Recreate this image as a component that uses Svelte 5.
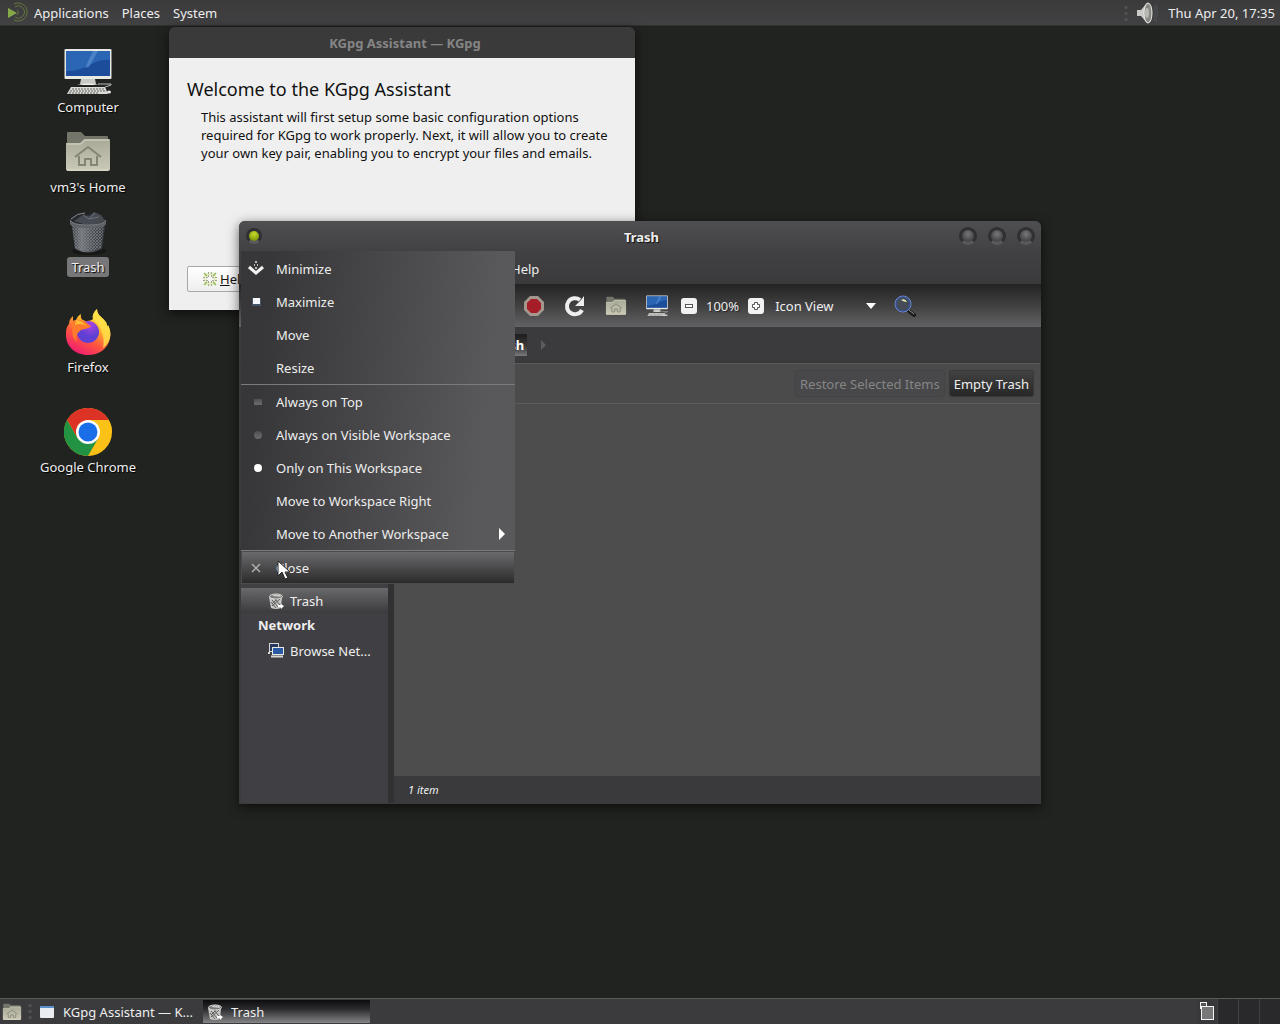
<script lang="ts">
	type Glyph = 'computer' | 'home' | 'bin' | 'firefox' | 'chrome';

	interface Launcher {
		label: string;
		glyph: Glyph;
		selected?: boolean;
		spaced?: boolean;
	}

	const launchers: Launcher[] = [
		{ label: 'Computer', glyph: 'computer' },
		{ label: "vm3's Home", glyph: 'home' },
		{ label: 'Trash', glyph: 'bin', selected: true },
		{ label: 'Firefox', glyph: 'firefox', spaced: true },
		{ label: 'Google Chrome', glyph: 'chrome', spaced: true }
	];

	const menus = ['Applications', 'Places', 'System'];
	const workspaces = [1, 2, 3, 4];

	let onTop = $state(false);
	let placement = $state('this');
	let viewMode = $state('Icon View');
</script>

{#snippet computer(size: number)}
	<svg width={size} height={size} viewBox="0 0 48 48" aria-hidden="true">
		<rect x="0.5" y="1" width="47" height="30" rx="1" fill="#e8e8e4" />
		<rect x="2" y="3" width="44" height="25" fill="#1c4d9a" />
		<path d="M2 3h44v9C30 10 22 24 2 23z" fill="#2a66b4" />
		<path d="M29 3l-8 17 4-1 9-16z" fill="#6b9ddb" opacity=".5" />
		<path d="M17 31h14l1 5H16z" fill="#c9c9c5" />
		<path d="M13 37q11-3 22 0z" fill="#f4f4f0" />
		<path d="M34 36h13v1l-6 2" fill="none" stroke="#bdbdb8" />
		<path d="M7 39h34l3 7H3z" fill="#dadad6" />
		<path d="M8 41h33M6 43h36M5 45h30" stroke="#62625f" stroke-dasharray="2 1" />
		<ellipse cx="45" cy="44" rx="2" ry="1.5" fill="#e8e8e4" />
	</svg>
{/snippet}

{#snippet homeFolder(size: number)}
	<svg width={size} height={size} viewBox="0 0 48 48" aria-hidden="true">
		<defs>
			<linearGradient id="folder-front" x2="0" y2="1">
				<stop offset="0" stop-color="#a9a997" />
				<stop offset="1" stop-color="#cbcab8" />
			</linearGradient>
		</defs>
		<path d="M3 40V5q0-1 1-1h13l4 4h22q1 0 1 1v30z" fill="#74756a" />
		<path d="M2 15h14l4-4h25q1 0 1 1v29q0 2-2 2H4q-2 0-2-2z" fill="url(#folder-front)" />
		<path d="M3 16h14l4-4h24" fill="none" stroke="#d8d7c6" />
		<path d="M3 42h41" stroke="#deddcb" />
		<path d="M11 29l13-10 13 10M15 28v9h6v-6h6v6h6v-9" fill="none" stroke="#858575" stroke-width="2" />
	</svg>
{/snippet}

{#snippet bin()}
	<svg width="48" height="48" viewBox="0 0 48 48" aria-hidden="true">
		<defs>
			<linearGradient id="bin-side">
				<stop offset="0" stop-color="#33363b" />
				<stop offset=".3" stop-color="#72767b" />
				<stop offset=".6" stop-color="#4b4f55" />
				<stop offset="1" stop-color="#303338" />
			</linearGradient>
			<pattern id="bin-mesh" width="3" height="3" patternUnits="userSpaceOnUse">
				<path d="M0 0l3 3M3 0L0 3" stroke="#85898e" stroke-width=".6" />
			</pattern>
		</defs>
		<ellipse cx="25" cy="43" rx="17" ry="4" fill="#111" opacity=".6" />
		<path d="M7 13l4 28q13 7 27 0l4-28z" fill="url(#bin-side)" />
		<path d="M8 17l3 23q13 6 26 0l3-23z" fill="url(#bin-mesh)" />
		<ellipse cx="24" cy="12" rx="18" ry="6" fill="#26292d" />
		<path d="M10 13l9-6 6 1 5-4 7 3 4 6q-15 7-31 0z" fill="#454a50" />
		<path d="M19 7l6 4 6-6M25 11l10-2" fill="none" stroke="#6b7076" />
		<path d="M6 12q2 5 18 5t18-5v4q-2 4-18 4T6 16z" fill="#5f6369" />
		<path d="M6 12q2 5 18 5t18-5" fill="none" stroke="#7c8085" />
		<path d="M7 11q6-6 14-6" fill="none" stroke="#8b8f94" />
	</svg>
{/snippet}

{#snippet smallBin()}
	<svg width="16" height="16" viewBox="0 0 16 16" aria-hidden="true">
		<path d="M1 4l2 11q5 2 10 0l1-11z" fill="#c6c7c4" />
		<path d="M4 7l6 7M7 6l5 6M3 9l5 6M12 6l-8 7M9 6l-5 5" stroke="#5c5c5c" />
		<ellipse cx="8" cy="3.500" rx="6.500" ry="2.500" fill="#777" stroke="#d9dad6" />
		<path d="M4 3l3-2 2 1 3-1 1 3" fill="#cacbc7" />
		<path d="M10 12h3v-1l3 2-3 3v-2h-3z" fill="#fff" />
	</svg>
{/snippet}

{#snippet firefox()}
	<svg width="48" height="48" viewBox="0 0 48 48" aria-hidden="true">
		<defs>
			<linearGradient id="fox-body" x1=".8" y1="0" x2=".25" y2="1">
				<stop offset="0" stop-color="#fff44f" />
				<stop offset=".35" stop-color="#ffb52e" />
				<stop offset=".65" stop-color="#ff553f" />
				<stop offset="1" stop-color="#ed1976" />
			</linearGradient>
			<radialGradient id="fox-globe" cx=".6" cy=".2">
				<stop offset="0" stop-color="#a946e0" />
				<stop offset="1" stop-color="#6040d4" />
			</radialGradient>
		</defs>
		<path d="M5 16c0-4 2-6 4-8v5l3-1c1-3 3-5 5-6-1 5 2 7 6 7 2 0 5-1 6-2-1-5 2-8 4-10 0 6 5 8 8 12 2 2 2 4 2 6l1-2c2 4 3 8 2 13C44 41 35 47 24 47 11 47 1 38 2 25c0-4 1-7 3-9z" fill="url(#fox-body)" />
		<path d="M33 1c0 6 5 8 8 12 2 2 2 4 2 6l1-2c2 4 3 8 2 13-1 4-4 8-7 10 2-8 0-20-10-29-1-5 2-8 4-10z" fill="#ffe14a" opacity=".8" />
		<circle cx="24" cy="24" r="11" fill="url(#fox-globe)" />
		<path d="M9 13c5-2 11-1 14 2 2 2 3 3 4 3-1 2-4 2-6 3-2 0-5 1-6 3-3 2-3 6-2 10-5-3-6-13-4-21z" fill="#ff7a2c" />
		<path d="M12 12c4 0 7 2 11 6-4-2-8-3-12-1z" fill="#ffbd35" />
	</svg>
{/snippet}

{#snippet chrome()}
	<svg width="48" height="48" viewBox="0 0 48 48" aria-hidden="true">
		<circle cx="24" cy="24" r="24" fill="#fbc116" />
		<path d="M24 24L3.200 12A24 24 0 0 1 44.800 12z" fill="#dd3327" />
		<path d="M24 12h20.800A24 24 0 0 1 48 24H24z" fill="#fbc116" />
		<path d="M3.200 12A24 24 0 0 0 24 48L34.400 30H24L13.600 30z" fill="#229342" />
		<path d="M3.200 12L13.600 30 24 12z" fill="#dd3327" />
		<circle cx="24" cy="24" r="12" fill="#fff" />
		<circle cx="24" cy="24" r="9.500" fill="#1a6fe8" />
	</svg>
{/snippet}

{#snippet grip()}
	<svg width="4" height="20" viewBox="0 0 4 20" aria-hidden="true">
		<path d="M2 3v3M2 9v3M2 15v3" stroke="#505052" stroke-width="3" />
	</svg>
{/snippet}

<div class="screen">
	<header class="panel">
		<svg class="logo" width="22" height="22" viewBox="0 0 22 22" aria-hidden="true">
			<path d="M2 6l9 5-9 5z" fill="#86a948" />
			<path d="M8 2a9 9 0 1 1 0 16M9 5a6 6 0 1 1 0 10M11 8a3 3 0 0 1 0 5" fill="none" stroke="#66773f" />
		</svg>
		<nav class="menus" aria-label="Desktop menus">
			{#each menus as name}
				<button type="button">{name}</button>
			{/each}
		</nav>
		<div class="tray">
			{@render grip()}
			<button type="button" aria-label="Volume">
				<svg width="22" height="22" viewBox="0 0 22 22" aria-hidden="true">
					<path d="M1 8h4l6-7q4-1 5 10-1 11-5 10l-6-7H1z" fill="#c9cac6" />
					<ellipse cx="12" cy="11" rx="4" ry="10" fill="#888985" stroke="#ecece9" />
					<ellipse cx="11" cy="11" rx="2" ry="5" fill="#b8b9b4" />
					<path d="M18 4q3 7 0 14M20 2q3 9 0 18" fill="none" stroke="#4c5159" />
				</svg>
			</button>
			<button type="button" class="clock">Thu Apr 20, 17:35</button>
		</div>
	</header>

	<main class="desktop">
		<nav class="launchers" aria-label="Desktop icons">
			{#each launchers as item}
				<button type="button" class="launcher" class:spaced={item.spaced}>
					{#if item.glyph === 'computer'}
						{@render computer(48)}
					{:else if item.glyph === 'home'}
						{@render homeFolder(48)}
					{:else if item.glyph === 'bin'}
						{@render bin()}
					{:else if item.glyph === 'firefox'}
						{@render firefox()}
					{:else}
						{@render chrome()}
					{/if}
					<span class:selected={item.selected}>{item.label}</span>
				</button>
			{/each}
		</nav>

		<section class="window assistant" aria-label="KGpg Assistant">
			<div class="titlebar inactive">KGpg Assistant — KGpg</div>
			<div class="assistant-page">
				<h1>Welcome to the KGpg Assistant</h1>
				<p>
					This assistant will first setup some basic configuration options required for KGpg to work
					properly. Next, it will allow you to create your own key pair, enabling you to encrypt your
					files and emails.
				</p>
				<button type="button" class="help">
					<svg width="16" height="16" viewBox="0 0 16 16" aria-hidden="true">
						<circle cx="8" cy="8" r="5" fill="none" stroke="#e9edd0" stroke-width="4" />
						<path d="M3 4l1-1M12 3l1 1M3 12l1 1M12 13l1-1" stroke="#93b84e" stroke-width="4" />
						<path d="M6 2h4M6 14h4M2 6v4M14 6v4M6 5h4M6 11h4M5 6v4M11 6v4" stroke="#5d6547" stroke-dasharray="1 2" />
					</svg>
					<span><u>H</u>elp</span>
				</button>
			</div>
		</section>

		<section class="window files" aria-label="Trash">
			<div class="titlebar">
				<button type="button" class="knob lit" aria-label="Window menu"></button>
				<span class="caption">Trash</span>
				<div class="knobs">
					<button type="button" class="knob" aria-label="Minimize window"></button>
					<button type="button" class="knob" aria-label="Maximize window"></button>
					<button type="button" class="knob" aria-label="Close window"></button>
				</div>
			</div>

			<div class="menubar"><button type="button">Help</button></div>

			<div class="toolbar">
				<button type="button" class="tool" aria-label="Stop">
					<svg width="22" height="22" viewBox="0 0 22 22" aria-hidden="true">
						<path d="M7 1h8l6 6v8l-6 6H7l-6-6V7z" fill="#a4978d" />
						<path d="M8 4h6l4 4v6l-4 4H8l-4-4V8z" fill="#a51d26" />
					</svg>
				</button>
				<button type="button" class="tool" aria-label="Reload">
					<svg width="22" height="22" viewBox="0 0 22 22" aria-hidden="true">
						<path d="M18 15a8 8 0 1 1-2-10" fill="none" stroke="#eee" stroke-width="4" />
						<path d="M20 1v10h-9l3-3 3-3z" fill="#eee" />
					</svg>
				</button>
				<button type="button" class="tool" aria-label="Home">{@render homeFolder(22)}</button>
				<button type="button" class="tool" aria-label="Computer">{@render computer(22)}</button>
				<div class="zoom">
					<button type="button" aria-label="Zoom out">
						<svg width="16" height="16" viewBox="0 0 16 16" aria-hidden="true">
							<rect width="16" height="16" rx="3" fill="#f2f2f2" />
							<rect x="4.500" y="6.500" width="7" height="3" fill="#fff" stroke="#555" />
						</svg>
					</button>
					<span>100%</span>
					<button type="button" aria-label="Zoom in">
						<svg width="16" height="16" viewBox="0 0 16 16" aria-hidden="true">
							<rect width="16" height="16" rx="3" fill="#f2f2f2" />
							<path d="M6.500 4.500h3v2h2v3h-2v2h-3v-2h-2v-3h2z" fill="#fff" stroke="#555" />
						</svg>
					</button>
				</div>
				<div class="view">
					<select aria-label="View mode" bind:value={viewMode}>
						<option>Icon View</option>
					</select>
					<svg width="10" height="6" viewBox="0 0 10 6" aria-hidden="true">
						<path d="M0 0h10L5 6z" fill="#fff" />
					</svg>
				</div>
				<button type="button" class="tool" aria-label="Search">
					<svg width="22" height="22" viewBox="0 0 22 22" aria-hidden="true">
						<path d="M15 16l5 4" stroke="#1b1b1b" stroke-width="4" stroke-linecap="round" />
						<path d="M15 15l5 4" stroke="#9a9a9a" />
						<circle cx="9" cy="9" r="8" fill="#454c58" stroke="#6f8fd2" />
						<circle cx="9" cy="9" r="7" fill="none" stroke="#3350a4" />
						<path d="M7 5q4-2 6 2-3 0-6-2z" fill="#e2efb4" />
					</svg>
				</button>
			</div>

			<div class="pathbar">
				<button type="button">Trash</button>
				<svg width="6" height="12" viewBox="0 0 6 12" aria-hidden="true">
					<path d="M0 1l5 5-5 5z" fill="#5c5c5e" />
				</svg>
			</div>

			<div class="body">
				<aside class="places">
					<button type="button" class="place current">{@render smallBin()}<span>Trash</span></button>
					<h2>Network</h2>
					<button type="button" class="place">
						<svg width="16" height="16" viewBox="0 0 16 16" aria-hidden="true">
							<rect x="1.500" y="0.500" width="9" height="8" fill="#25395f" stroke="#d8d8d4" />
							<rect x="4.500" y="4.500" width="11" height="7" fill="#2b5aa5" stroke="#e8e8e4" />
							<path d="M0 10h2M3 13.500h12" stroke="#d8d8d4" stroke-width="2" />
						</svg>
						<span>Browse Net...</span>
					</button>
				</aside>
				<div class="contents">
					<div class="actions">
						<button type="button" disabled>Restore Selected Items</button>
						<button type="button">Empty Trash</button>
					</div>
					<div class="canvas"></div>
					<footer class="status">1 item</footer>
				</div>
			</div>

			<div class="popup" role="menu">
				<button type="button" role="menuitem">
					<svg width="16" height="16" viewBox="0 0 16 16" aria-hidden="true">
						<path d="M1 6l7 6 7-6" fill="none" stroke="#f2f2f2" stroke-width="3" />
						<path d="M6 4h1M9 4h1M7 1h2M7 7h2" stroke="#bbb" stroke-width="2" />
					</svg>
					<span>Minimize</span>
				</button>
				<button type="button" role="menuitem">
					<svg width="16" height="16" viewBox="0 0 16 16" aria-hidden="true">
						<rect x="4" y="4" width="9" height="8" fill="#42536b" />
						<rect x="5" y="4" width="7" height="6" fill="#f4f6fa" />
					</svg>
					<span>Maximize</span>
				</button>
				<button type="button" role="menuitem"><i></i><span>Move</span></button>
				<button type="button" role="menuitem"><i></i><span>Resize</span></button>
				<hr />
				<label><input type="checkbox" bind:checked={onTop} /><span>Always on Top</span></label>
				<label>
					<input type="radio" name="placement" value="all" bind:group={placement} />
					<span>Always on Visible Workspace</span>
				</label>
				<label>
					<input type="radio" name="placement" value="this" bind:group={placement} />
					<span>Only on This Workspace</span>
				</label>
				<button type="button" role="menuitem"><i></i><span>Move to Workspace Right</span></button>
				<button type="button" role="menuitem">
					<i></i><span>Move to Another Workspace</span>
					<svg class="more" width="6" height="12" viewBox="0 0 6 12" aria-hidden="true">
						<path d="M0 0l6 6-6 6z" fill="#fff" />
					</svg>
				</button>
				<hr />
				<button type="button" role="menuitem" class="hover">
					<svg width="16" height="16" viewBox="0 0 16 16" aria-hidden="true">
						<path d="M4 4l8 8M12 4l-8 8" stroke="#b0b0b0" stroke-width="1.500" />
					</svg>
					<span>Close</span>
				</button>
				<svg class="pointer" width="13" height="20" viewBox="0 0 13 20" aria-hidden="true">
					<path d="M1 1v15l4-4 3 7 3-1-3-6h5z" fill="#fff" stroke="#222" />
				</svg>
			</div>
		</section>
	</main>

	<footer class="taskbar">
		<button type="button" class="show" aria-label="Home folder">{@render homeFolder(20)}</button>
		{@render grip()}
		<button type="button" class="task">
			<svg width="16" height="16" viewBox="0 0 16 16" aria-hidden="true">
				<rect x="1" y="2" width="14" height="12" rx="1" fill="#e9edf2" />
				<path d="M1 4V3q0-1 1-1h12q1 0 1 1v1z" fill="#5b8fcc" />
			</svg>
			<span>KGpg Assistant — K...</span>
		</button>
		<button type="button" class="task pressed">{@render smallBin()}<span>Trash</span></button>
		<div class="workspaces">
			{#each workspaces as n}
				<button type="button" class:active={n === 1} aria-label={`Workspace ${n}`}>
					{#if n === 1}
						<svg width="20" height="22" viewBox="0 0 20 22" aria-hidden="true">
							<rect x="3.500" y="1.500" width="6" height="6" fill="#555" stroke="#f4f4f4" />
							<rect x="4.500" y="5.500" width="12" height="13" fill="#777" stroke="#f4f4f4" />
						</svg>
					{/if}
				</button>
			{/each}
		</div>
	</footer>
</div>

<style>
	:global(body) {
		margin: 0;
		background: #212320;
	}

	.screen {
		display: flex;
		flex-direction: column;
		height: 100vh;
		overflow: hidden;
		background: #212320;
		color: #eee;
		font-family: 'Noto Sans', sans-serif;
		font-size: 13px;
		line-height: 18px;
		cursor: default;
	}

	button,
	select {
		margin: 0;
		padding: 0;
		border: 0;
		background: none;
		color: inherit;
		font: inherit;
	}

	svg {
		display: block;
		flex: none;
	}

	/* top panel */
	.panel {
		display: flex;
		align-items: center;
		height: 26px;
		box-sizing: border-box;
		padding: 0 5px 0 6px;
		background: linear-gradient(#3b3b3c, #414143);
		border-bottom: 1px solid #303030;
		text-shadow: 1px 1px 1px #1a1a1a;
	}

	.menus {
		display: flex;
		gap: 13px;
		margin-left: 6px;
	}

	.tray {
		display: flex;
		align-items: center;
		gap: 8px;
		margin-left: auto;
	}

	.clock {
		margin-left: 2px;
	}

	/* desktop icons */
	.desktop {
		position: relative;
		flex: 1;
		min-height: 0;
	}

	.launchers {
		display: flex;
		flex-direction: column;
		gap: 10px;
		width: 160px;
		padding: 22px 8px;
	}

	.launcher {
		display: flex;
		flex-direction: column;
		align-items: center;
		gap: 1px;
		padding-bottom: 1px;
	}

	.launcher.spaced {
		margin-top: 20px;
	}

	.launcher span {
		padding: 1px 4px;
		border-radius: 3px;
		text-shadow: 1px 1px 1px #000;
	}

	.launcher .selected {
		background: #777779;
	}

	/* windows */
	.window {
		position: absolute;
		border-radius: 6px 6px 0 0;
		box-shadow: 0 3px 12px rgba(0, 0, 0, 0.6);
	}

	.titlebar {
		display: flex;
		align-items: center;
		height: 31px;
		box-sizing: border-box;
		padding: 0 6px 1px 7px;
		border-radius: 6px 6px 0 0;
		background: linear-gradient(#4f4f51, #414143);
		font-weight: bold;
		text-shadow: 1px 1px 1px #111;
	}

	.titlebar.inactive {
		justify-content: center;
		padding: 0 0 0 6px;
		background: #3a3a3b;
		color: #858585;
		text-shadow: none;
	}

	.assistant {
		top: 1px;
		left: 169px;
		width: 466px;
	}

	.assistant-page {
		display: flex;
		flex-direction: column;
		height: 252px;
		box-sizing: border-box;
		padding: 19px 18px 18px;
		background: #efefef;
		color: #111;
	}

	h1 {
		margin: 0;
		font-size: 18px;
		font-weight: normal;
		line-height: 24px;
	}

	.assistant-page p {
		margin: 7px 8px 0 14px;
	}

	.help {
		display: flex;
		align-items: center;
		gap: 2px;
		width: 86px;
		height: 26px;
		box-sizing: border-box;
		margin-top: auto;
		padding-left: 14px;
		border: 1px solid #a8a8a8;
		border-radius: 2px;
		background: linear-gradient(#fff, #eee);
	}

	.files {
		display: flex;
		flex-direction: column;
		top: 195px;
		left: 239px;
		width: 802px;
		height: 583px;
		background: #3b3b3d;
	}

	.caption {
		flex: 1;
		padding: 2px 0 0 62px;
		text-align: center;
	}

	.knobs {
		display: flex;
		gap: 11px;
	}

	.knob {
		width: 18px;
		height: 18px;
		border: 3px solid #303032;
		border-bottom-color: #5a5a5c;
		border-radius: 50%;
		background: radial-gradient(circle at 50% 35%, #77777a, #48484a 65%);
	}

	.knob.lit {
		width: 16px;
		height: 16px;
		background: radial-gradient(circle at 50% 30%, #c6dc2c, #7c9409 80%);
	}

	.menubar {
		display: flex;
		align-items: center;
		justify-content: flex-start;
		height: 32px;
		padding: 2px 0 0 272px;
		box-sizing: border-box;
		background: linear-gradient(#414143, #3a3a3c);
	}

	.toolbar {
		display: flex;
		align-items: center;
		height: 43px;
		padding-left: 284px;
		background: linear-gradient(#232323, #404041 50%, #626264);
		text-shadow: 1px 1px 1px #222;
	}

	.tool {
		margin-right: 19px;
	}

	.zoom {
		display: flex;
		align-items: center;
		gap: 9px;
		margin-left: -6px;
	}

	.view {
		display: flex;
		align-items: center;
		width: 101px;
		margin: 0 18px 0 11px;
	}

	.view select {
		flex: 1;
		min-width: 0;
		appearance: none;
	}

	.pathbar {
		display: flex;
		align-items: center;
		gap: 14px;
		height: 36px;
		box-sizing: border-box;
		padding-left: 250px;
		border-bottom: 1px solid #353536;
	}

	.pathbar button {
		height: 22px;
		padding-right: 3px;
		background: linear-gradient(#1d1d1e, #3c3c3d 60%, #7a7a7c);
		color: #fff;
		font-weight: bold;
	}

	.body {
		display: flex;
		flex: 1;
		min-height: 0;
		padding: 0 1px 1px 2px;
	}

	.places {
		width: 148px;
		box-sizing: border-box;
		padding-top: 225px;
		border-right: 1px solid #303032;
		background: #404044;
	}

	.place {
		display: flex;
		align-items: center;
		gap: 6px;
		width: 100%;
		height: 25px;
		padding-left: 27px;
		text-align: left;
	}

	.place.current {
		background: linear-gradient(#69696b, #3b3b3d);
	}

	h2 {
		margin: 0;
		padding-left: 17px;
		font-size: 13px;
		line-height: 25px;
	}

	.contents {
		display: flex;
		flex: 1;
		flex-direction: column;
		border-left: 5px solid #313132;
	}

	.actions {
		display: flex;
		align-items: center;
		justify-content: flex-end;
		gap: 6px;
		height: 39px;
		padding-right: 7px;
		border-top: 1px solid #5c5c5e;
		border-bottom: 1px solid #5c5c5e;
		background: #4b4b4c;
	}

	.actions button {
		height: 25px;
		padding: 0 4px;
		border-radius: 2px;
		background: linear-gradient(#424243, #272728);
		box-shadow: 0 0 1px 1px #383839;
	}

	.actions button:disabled {
		background: #48484a;
		box-shadow: 0 0 1px 1px #444445;
		color: #858586;
	}

	.canvas {
		flex: 1;
		background: #4d4d4d;
	}

	.status {
		padding: 5px 14px;
		background: #3a3a3c;
		font-size: 11px;
		font-style: italic;
		line-height: 17px;
	}

	/* window menu, opened over the file manager */
	.popup {
		position: absolute;
		top: 30px;
		left: 2px;
		width: 274px;
		box-sizing: border-box;
		padding-top: 1px;
		background: linear-gradient(96deg, #373739 10%, #59595b 85%);
	}

	.popup button,
	.popup label {
		display: flex;
		align-items: center;
		gap: 12px;
		width: 100%;
		height: 33px;
		box-sizing: border-box;
		padding: 1px 10px 0 7px;
		text-align: left;
	}

	.popup i {
		width: 16px;
	}

	.popup .more {
		margin-left: auto;
	}

	.popup hr {
		height: 1px;
		margin: 0;
		border: 0;
		background: #7b7b7c;
	}

	.popup input {
		width: 8px;
		height: 6px;
		margin: 0 2px 0 6px;
		appearance: none;
		background: linear-gradient(#505052, #6c6c6e);
	}

	.popup input[type='radio'] {
		height: 8px;
		border-radius: 50%;
	}

	.popup input[type='radio']:checked {
		background: #fff;
	}

	.popup .hover {
		background: linear-gradient(#6c6c6e, #29292a);
		box-shadow: inset 0 0 0 1px #4b4b4c;
	}

	.pointer {
		position: absolute;
		bottom: 4px;
		left: 36px;
	}

	/* bottom panel */
	.taskbar {
		display: flex;
		align-items: stretch;
		height: 26px;
		box-sizing: border-box;
		padding-left: 2px;
		border-top: 1px solid #5a5a5b;
		background: #3b3b3d;
		text-shadow: 1px 1px 1px #1a1a1a;
	}

	.taskbar > :global(svg) {
		margin: 2px 5px 0 6px;
	}

	.task {
		display: flex;
		align-items: center;
		gap: 8px;
		width: 167px;
		margin: 1px 0;
		padding-left: 4px;
		white-space: nowrap;
	}

	.task:not(.pressed) {
		width: 166px;
		padding-left: 2px;
	}

	.task.pressed {
		background: linear-gradient(#0c0c0d, #2c2c2e 40%, #858588);
	}

	.workspaces {
		display: flex;
		gap: 1px;
		margin-left: auto;
		background: #404042;
	}

	.workspaces button {
		width: 20px;
		background: #29292b;
	}

	.workspaces .active {
		background: #38383a;
	}
</style>
